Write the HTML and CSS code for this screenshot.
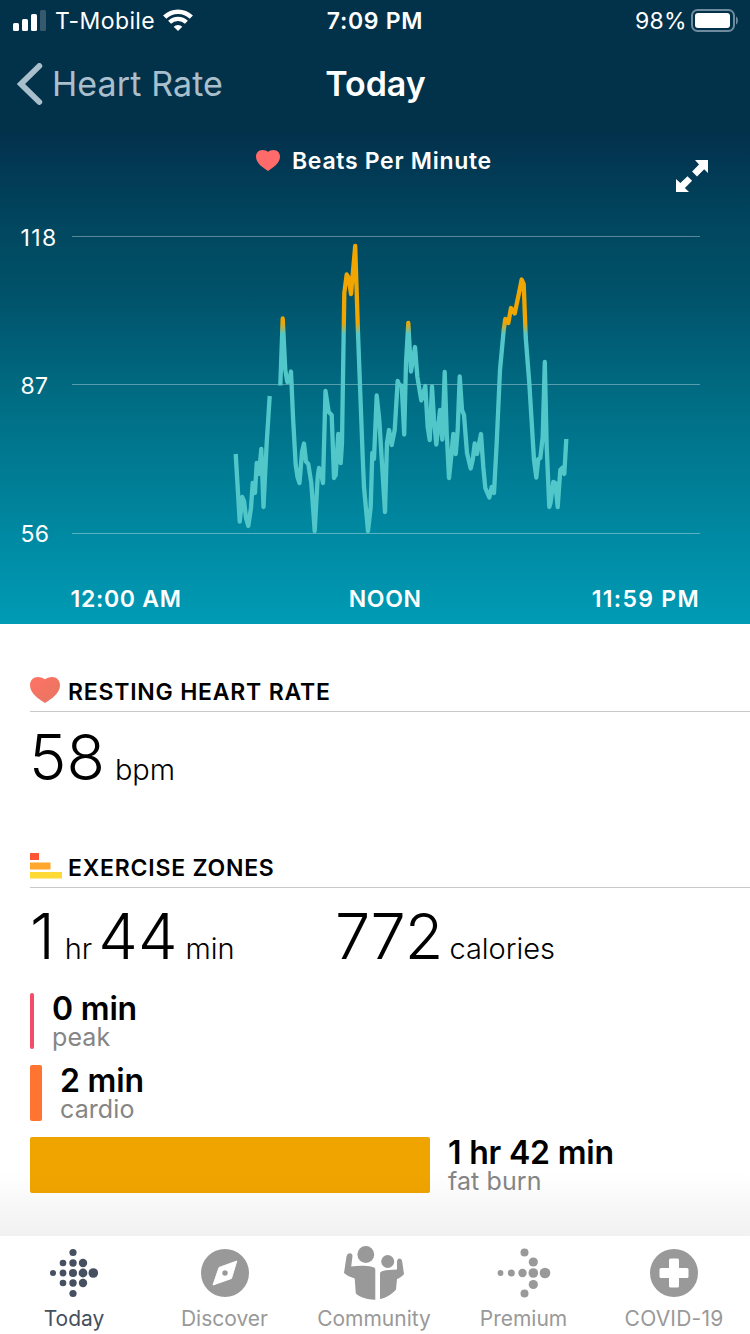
FILE: index.html
```html
<!DOCTYPE html>
<html lang="en">
<head>
    <meta charset="UTF-8">
    <meta name="viewport" content="width=device-width, initial-scale=1.0">
    <title>Heart Rate - Today</title>
    <link rel="stylesheet" href="styles.css">
</head>
<body>
    <div class="screen">
        <header class="hero">
            <div class="status-bar">
                <div class="status-left">
                    <svg class="signal" width="34" height="22" viewBox="0 0 34 22">
                        <rect x="0" y="13" width="6" height="8" rx="1.5" fill="#fff"/>
                        <rect x="9" y="9" width="6" height="12" rx="1.5" fill="#fff"/>
                        <rect x="18" y="4" width="6" height="17" rx="1.5" fill="#fff"/>
                        <rect x="27" y="0" width="6" height="21" rx="1.5" fill="#36596d"/>
                    </svg>
                    <span class="carrier">T-Mobile</span>
                    <svg class="wifi" width="30" height="23" viewBox="0 0 30 23" fill="none" stroke="#fff">
                        <path d="M1.7 8.2a19 19 0 0 1 26.6 0" stroke-width="4.6"/>
                        <path d="M6.6 13.3a12 12 0 0 1 16.8 0" stroke-width="4.2"/>
                        <path d="M15 22l-4.3-4.3a6 6 0 0 1 8.6 0z" fill="#fff" stroke="none"/>
                    </svg>
                </div>
                <span class="clock">7:09 PM</span>
                <div class="status-right">
                    <span class="percent">98%</span>
                    <svg class="battery" width="48" height="23" viewBox="0 0 48 23">
                        <rect x="1" y="1" width="42" height="21" rx="5.5" fill="none" stroke="#6d8b9c" stroke-width="2"/>
                        <rect x="4" y="4" width="35" height="15" rx="3" fill="#fff"/>
                        <path d="M45 7.5c2.6 1 2.6 7 0 8z" fill="#6d8b9c"/>
                    </svg>
                </div>
            </div>

            <nav class="nav-bar">
                <a class="back">
                    <svg width="26" height="42" viewBox="0 0 26 42">
                        <path d="M22.3 3L4 21l18.3 18" fill="none" stroke="#a9bfcc" stroke-width="5.8" stroke-linecap="round" stroke-linejoin="miter"/>
                    </svg>
                    <span>Heart Rate</span>
                </a>
                <h1>Today</h1>
            </nav>

            <div class="chart-title">
                <svg class="heart-small" width="24" height="21" viewBox="0 0 30 26">
                    <path d="M15 26C9 22.3 0 16.5 0 8.3 0 3.5 3.4 0 7.9 0c3 0 5.6 1 7.100 2.300C16.5 1 19.1 0 22.1 0 26.6 0 30 3.5 30 8.3 30 16.5 21 22.3 15 26z" fill="#ff6a6a"/>
                </svg>
                <span>Beats Per Minute</span>
                <svg class="expand" width="32" height="32" viewBox="0 0 32 32" fill="#fff">
                    <path d="M19 0h13v13l-3.8-3.8-7.2 7.2-4.9-4.9 6.9-7.1z"/>
                    <path d="M13 32H0V19l4.4 4.1 7.1-6.9 4.6 4.6-7.2 7.1z"/>
                </svg>
            </div>

            <div class="chart">
                <div class="y-axis">
                    <span class="y-max">118</span>
                    <span>87</span>
                    <span>56</span>
                </div>
                <svg class="plot" width="628" height="320" viewBox="72 226 628 320">
                    <defs>
                        <linearGradient id="zone" gradientUnits="userSpaceOnUse" x1="0" y1="323" x2="0" y2="334">
                            <stop offset="0" stop-color="#f0a500"/>
                            <stop offset="1" stop-color="#52c7ca"/>
                        </linearGradient>
                    </defs>
                    <g stroke="#fff" stroke-opacity="0.35">
                        <line x1="72" x2="700" y1="236.5" y2="236.5"/>
                        <line x1="72" x2="700" y1="384.5" y2="384.5"/>
                        <line x1="72" x2="700" y1="533.5" y2="533.5"/>
                    </g>
                    <g fill="none" stroke="url(#zone)" stroke-width="4.3" stroke-linejoin="round">
                        <polyline points="235.7,454 239.7,521.5 242.3,497 244,501 246,518 248.3,526 251,508 252.7,483 255,493 256.7,463 259,474 261.3,449 263.5,507 266.7,443 269.7,396"/>
                        <polyline points="280.3,385.5 282.7,318.5 285.3,370 287.3,382 289.3,381.5 291,371.5 293,417 295.7,465 297.5,477 299.5,483 302,452 304,443.5 306,461.5 308.3,464 311.3,483 314.7,531 317.7,477 319,468 320.7,471 323,483 325.5,391 328.7,412 331.7,415 334,478 335.7,475 338.3,434 340.7,463 342,443 344.3,293 346.7,274.5 348.7,278 351,294 355.2,246 358,333 362.7,457 364,487 368,531 370.7,507 372.3,453 374,459 376.7,395.5 379.3,420 385,512 387,443 389,430 391.7,445 394.7,430 397.7,381 399.3,385 401.7,385.5 404.2,434.5 406,363 408.3,323 411,371.5 415,347 417.3,376.5 421.3,400.5 425.3,386 427.7,427 429.7,440 432,386.5 434,420 436.3,444.5 440,410 442.3,439.5 444.7,372 446.7,433 449,478 451.7,452 453.3,434 455.7,454 457.7,430 459.7,376.5 462,410 464,415 467,453 470.7,468.5 472.7,460 474.7,443.5 477,454 481,434 483.3,467 485.3,488 489.3,497.5 491.7,487 494,493 496.7,443 500,370 503.7,330 505.3,319 508.3,323 511,308 514.7,313.5 519,293 521.7,279.5 523.7,284 525.7,337 529.3,383 534,460 536.3,477.5 538.3,459 540.3,458 542.7,437 544.8,362 546.7,447 549.3,507 550.5,503 553.3,482 555.3,483 557.7,507 560.3,470 562.7,467.5 564.3,474 566.3,439"/>
                    </g>
                </svg>
            </div>

            <div class="x-axis">
                <span class="x-start">12:00 AM</span>
                <span class="x-noon">NOON</span>
                <span class="x-end">11:59 PM</span>
            </div>
        </header>

        <main class="content">
            <section class="resting">
                <h2>
                    <svg class="heart" width="30" height="26" viewBox="0 0 30 26">
                        <defs>
                            <linearGradient id="heartFill" x1="0" y1="0" x2="1" y2="1">
                                <stop offset="0" stop-color="#ff7264"/>
                                <stop offset="1" stop-color="#e67662"/>
                            </linearGradient>
                        </defs>
                        <path d="M15 26C9 22.3 0 16.5 0 8.3 0 3.5 3.4 0 7.9 0c3 0 5.6 1 7.1 2.300C16.5 1 19.1 0 22.1 0 26.6 0 30 3.5 30 8.3 30 16.5 21 22.3 15 26z" fill="url(#heartFill)"/>
                    </svg>
                    <span class="resting-title">RESTING HEART RATE</span>
                </h2>
                <div class="stats">
                    <span class="big">58</span>
                    <span class="unit bpm">bpm</span>
                </div>
            </section>

            <section class="zones">
                <h2>
                    <svg class="zone-icon" width="32" height="26" viewBox="0 0 32 26">
                        <rect width="9" height="7" fill="#ff5533"/>
                        <rect y="9.5" width="20.5" height="7" fill="#ffa62f"/>
                        <rect y="19" width="32" height="6.5" fill="#ffd935"/>
                    </svg>
                    <span class="zones-title">EXERCISE ZONES</span>
                </h2>
                <div class="stats">
                    <div class="stat-time">
                        <span class="big">1</span>
                        <span class="unit hr">hr</span>
                        <span class="big minutes">44</span>
                        <span class="unit min">min</span>
                    </div>
                    <div class="stat-calories">
                        <span class="big calories">772</span>
                        <span class="unit cal">calories</span>
                    </div>
                </div>

                <div class="zone">
                    <div class="bar peak" style="width: 4px"></div>
                    <div class="zone-text">
                        <strong>0 min</strong>
                        <span>peak</span>
                    </div>
                </div>
                <div class="zone">
                    <div class="bar cardio" style="width: 12px"></div>
                    <div class="zone-text">
                        <strong>2 min</strong>
                        <span>cardio</span>
                    </div>
                </div>
                <div class="zone">
                    <div class="bar fat-burn" style="width: 400px"></div>
                    <div class="zone-text">
                        <strong>1 hr 42 min</strong>
                        <span>fat burn</span>
                    </div>
                </div>
            </section>
        </main>

        <footer class="tab-bar">
            <a class="tab active">
                <svg width="60" height="60" viewBox="0 0 60 60" fill="currentColor">
                    <circle cx="9" cy="30" r="3"/>
                    <circle cx="19" cy="20" r="3.3"/><circle cx="19" cy="30" r="3.4"/><circle cx="19" cy="40" r="3.3"/>
                    <circle cx="29" cy="9.5" r="3.6"/><circle cx="29" cy="20" r="3.7"/><circle cx="29" cy="30" r="4"/><circle cx="29" cy="40" r="3.7"/><circle cx="29" cy="50.5" r="3.6"/>
                    <circle cx="39" cy="20" r="4.2"/><circle cx="39" cy="30" r="4.4"/><circle cx="39" cy="40" r="4.2"/>
                    <circle cx="49.3" cy="30" r="4.8"/>
                </svg>
                <span>Today</span>
            </a>
            <a class="tab">
                <svg width="60" height="60" viewBox="0 0 60 60">
                    <circle cx="30" cy="30" r="24" fill="currentColor"/>
                    <path d="M41.8 18L36.5 35.5 18 42l6-17.5z" fill="#fff" stroke="#fff" stroke-linejoin="round"/>
                    <circle cx="30" cy="30" r="2.7" fill="currentColor"/>
                </svg>
                <span>Discover</span>
            </a>
            <a class="tab community">
                <svg width="60" height="60" viewBox="0 0 60 60" fill="currentColor">
                    <circle cx="21.8" cy="11.5" r="8.4"/>
                    <circle cx="43.7" cy="18.5" r="6.5"/>
                    <path d="M2.5 13.5C3 9.2 8.5 9 8.5 13L7.2 23.5c8-1 15-.8 20.5.2 2.6.5 3.6 1.2 3.6 3v30c-7.5.2-14.5-2.1-19.500-6.200L10.7 35.500C6 34 3 32.500 0 30z"/>
                    <path d="M36 56V31c0-1.8.8-2.5 2.8-3 4-.9 8.500-1.200 14.200-1.400V19c0-4.500 4.700-4.500 5.200-.5L60 31c-2 2.600-4.300 4-7 5l-1 10.500c-4 4.800-9.600 8.300-16 9.500z"/>
                </svg>
                <span>Community</span>
            </a>
            <a class="tab">
                <svg width="60" height="60" viewBox="0 0 60 60" fill="currentColor">
                    <circle cx="6.5" cy="30" r="2.9"/>
                    <circle cx="17.3" cy="30" r="3.5"/>
                    <circle cx="28.5" cy="30" r="4.2"/>
                    <circle cx="30.5" cy="9.5" r="4"/><circle cx="30.5" cy="50.5" r="4"/>
                    <circle cx="39.3" cy="19" r="4.6"/><circle cx="39.3" cy="30" r="4.8"/><circle cx="39.3" cy="41.5" r="4.6"/>
                    <circle cx="51" cy="30" r="5.3"/>
                </svg>
                <span>Premium</span>
            </a>
            <a class="tab covid">
                <svg width="60" height="60" viewBox="0 0 60 60">
                    <circle cx="30" cy="30" r="24" fill="currentColor"/>
                    <path d="M26.5 15.5h7q1.5 0 1.5 1.5v8h8q1.5 0 1.5 1.5v7q0 1.5-1.5 1.5h-8v8q0 1.5-1.5 1.5h-7q-1.5 0-1.5-1.5v-8h-8q-1.5 0-1.5-1.5v-7q0-1.5 1.5-1.5h8v-8q0-1.5 1.5-1.5z" fill="#fff"/>
                </svg>
                <span>COVID-19</span>
            </a>
        </footer>
    </div>
</body>
</html>
```
FILE: styles.css
```css
* {
    box-sizing: border-box;
}
body {
    margin: 0;
    font-family: Inter, "Liberation Sans", sans-serif;
    background-color: #fff;
    color: #000;
}
svg {
    display: block;
    flex-shrink: 0;
}
span, strong, h1, h2 {
    white-space: nowrap;
}
.screen {
    width: 750px;
    height: 1334px;
    display: flex;
    flex-direction: column;
    overflow: hidden;
}

/* header */
.hero {
    height: 624px;
    flex-shrink: 0;
    color: #fff;
    background: linear-gradient(to bottom, #02314a 0, #02314a 130px, #02324e 140px, #01475f 225px, #005169 290px, #006d84 400px, #0088a1 530px, #009bb5 624px);
}
.status-bar {
    height: 40px;
    display: grid;
    grid-template-columns: 1fr auto 1fr;
    align-items: center;
    padding: 1px 11px 0 13px;
    font-size: 23px;
    line-height: 28px;
}
.status-left, .status-right {
    display: flex;
    align-items: center;
}
.status-right {
    justify-content: flex-end;
    gap: 4px;
}
.carrier {
    margin-left: 8px;
    letter-spacing: 0.4px;
}
.wifi {
    margin-left: 8px;
}
.clock {
    font-weight: 600;
    letter-spacing: 0.7px;
    margin-right: 2px;
}
.percent {
    letter-spacing: 0.3px;
}
.nav-bar {
    height: 88px;
    display: grid;
    grid-template-columns: 1fr auto 1fr;
    align-items: center;
    padding: 0 16px 0 17px;
}
.back {
    display: flex;
    align-items: center;
    gap: 9px;
    font-size: 34px;
    letter-spacing: 0.1px;
    color: #a9bfcc;
}
.back span, h1 {
    padding-bottom: 2px;
}
h1 {
    margin: 0;
    font-size: 34px;
    font-weight: 600;
}
.chart-title {
    height: 74px;
    display: flex;
    align-items: center;
    padding: 0 42px 10px 256px;
    font-size: 23px;
    font-weight: 600;
}
.chart-title span {
    margin-left: 12px;
    padding-top: 2px;
    letter-spacing: 0.7px;
}
.expand {
    margin: 31px 0 0 auto;
}
.chart {
    display: flex;
    margin-top: 24px;
    height: 320px;
}
.y-axis {
    width: 72px;
    padding-left: 20.5px;
    height: 320px;
    display: flex;
    flex-direction: column;
    justify-content: space-between;
    font-size: 23px;
    line-height: 24px;
    letter-spacing: 0.2px;
}
.y-max {
    letter-spacing: 1.4px;
}
.x-axis {
    display: grid;
    grid-template-columns: 1fr auto 1fr;
    margin-top: 38px;
    padding: 0 50px 0 70.5px;
    font-size: 23px;
    line-height: 30px;
    font-weight: 600;
    letter-spacing: 0.7px;
}
.x-end {
    text-align: right;
    letter-spacing: 1.3px;
}

/* sections */
.content {
    position: relative;
    height: 612px;
    flex-shrink: 0;
    padding-left: 30px;
}
.content::after {
    content: "";
    position: absolute;
    left: 0;
    right: 0;
    bottom: 0;
    height: 64px;
    background: linear-gradient(to bottom, rgba(0,0,0,0), rgba(0,0,0,0.055));
}
h2 {
    height: 48px;
    margin: 0;
    padding-top: 4px;
    display: flex;
    align-items: center;
    border-bottom: 1px solid #c8c8cc;
    font-size: 23px;
    font-weight: 600;
    letter-spacing: 0.78px;
}
h2 span {
    padding-top: 4px;
}
.resting {
    height: 216px;
    padding-top: 40px;
}
.resting-title {
    margin-left: 8px;
}
.zones-title {
    margin-left: 6px;
}
.stats {
    height: 90px;
    display: flex;
    align-items: baseline;
    line-height: 90px;
}
.resting .stats {
    margin-left: -1px;
}
.big {
    font-size: 63px;
    font-weight: 300;
}
.unit {
    font-size: 29px;
    font-weight: 300;
}
.bpm {
    margin-left: 10px;
}
.stat-time, .stat-calories {
    display: flex;
    align-items: baseline;
}
.stat-time {
    width: 305px;
}
.hr {
    margin-left: 10px;
}
.minutes {
    margin-left: 6px;
}
.min {
    margin-left: 8px;
}
.calories {
    letter-spacing: -1px;
}
.cal {
    margin-left: 7px;
}
.zones .stats {
    height: 105px;
    padding-top: 3px;
}
.zone {
    height: 56px;
    margin-bottom: 16px;
    display: flex;
    gap: 18px;
}
.bar {
    height: 56px;
    border-radius: 2px;
}
.peak {
    background-color: #f44b69;
}
.cardio {
    background-color: #ff7430;
}
.fat-burn {
    background-color: #f0a400;
}
.zone-text {
    display: flex;
    flex-direction: column;
}
.zone-text strong {
    font-size: 32px;
    line-height: 32px;
    font-weight: 600;
    letter-spacing: -0.2px;
}
.zone-text span {
    font-size: 25px;
    line-height: 24px;
    letter-spacing: 0.1px;
    color: #858585;
}

/* bottom tabs */
.tab-bar {
    height: 98px;
    flex-shrink: 0;
    display: grid;
    grid-template-columns: 148px 153px 146px 153px 148px;
    background-color: #fff;
}
.tab {
    display: flex;
    flex-direction: column;
    align-items: center;
    padding-top: 7px;
    color: #999;
    font-size: 21px;
    line-height: 32px;
}
.active {
    color: #465060;
}
.covid {
    letter-spacing: 0.2px;
}
```
